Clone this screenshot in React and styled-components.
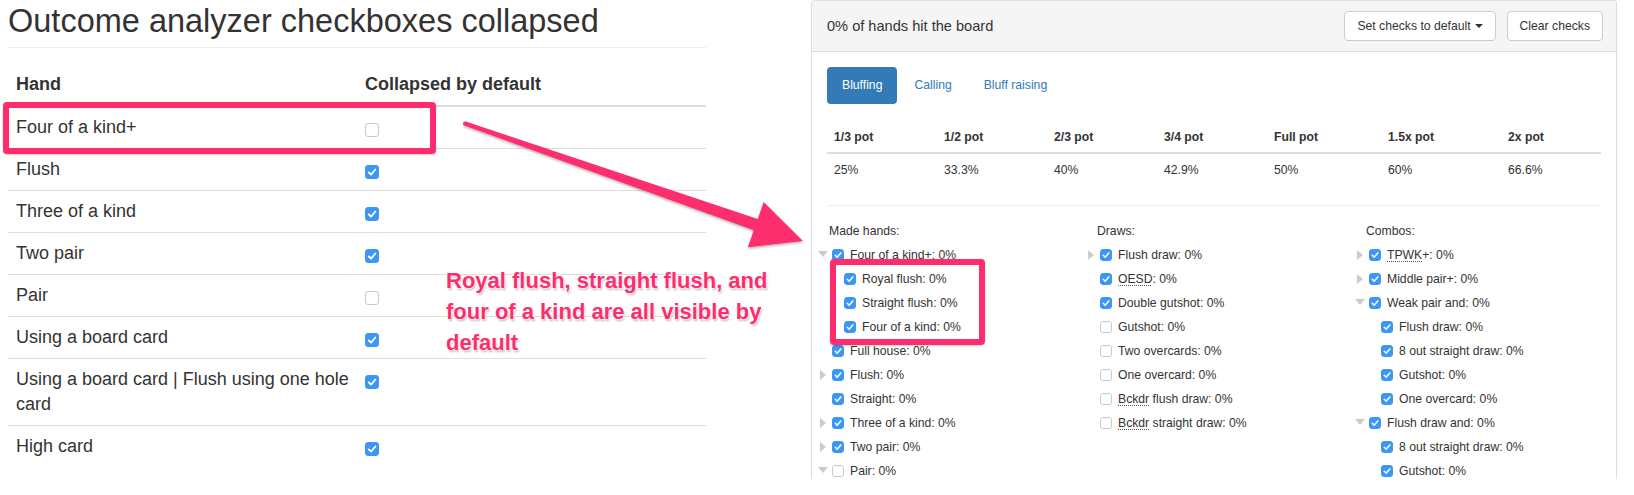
import React from 'react'
import styled, { createGlobalStyle } from 'styled-components'

const PINK = '#fd2d6d'
const MAC_BLUE = '#3b96f6'
const LINK = '#337ab7'

const GlobalStyle = createGlobalStyle`
    html, body {
        margin: 0;
        padding: 0;
        background: #fff;
    }
    body {
        font-family: "Liberation Sans", Arial, Helvetica, sans-serif;
        color: #333;
    }
`

const Page = styled.div`
    position: relative;
    display: flex;
    align-items: flex-start;
    width: 1634px;
    height: 495px;
    overflow: hidden;
`

/* ---------- left: the markdown-ish doc ---------- */

const Doc = styled.section`
    width: 698px;
    margin-left: 8px;
`

const Title = styled.h1`
    margin: 4px 0 16px;
    padding-bottom: 8px;
    border-bottom: 1px solid #eee;
    font-size: 32.5px;
    font-weight: 400;
    line-height: 35px;
    color: #333;
`

const HandTable = styled.table`
    width: 100%;
    border-collapse: collapse;
    font-size: 18px;
    line-height: 25px;
`

const HeadCell = styled.th`
    padding: 8px ${({ $first }) => ($first ? '6px' : '8px')} 8px 8px;
    width: ${({ $first }) => ($first ? '335px' : 'auto')};
    border-bottom: 2px solid #ddd;
    text-align: left;
    font-weight: 700;
`

const Cell = styled.td`
    padding: 8px ${({ $first }) => ($first ? '6px' : '8px')} 8px 8px;
    border-top: 1px solid #ddd;
    vertical-align: top;
`

/* ---------- checkbox ---------- */

const Box = styled.span`
    box-sizing: border-box;
    display: ${({ $block }) => ($block ? 'flex' : 'inline-flex')};
    align-items: center;
    justify-content: center;
    flex: none;
    width: ${({ $size }) => $size}px;
    height: ${({ $size }) => $size}px;
    margin-top: ${({ $block }) => ($block ? '8px' : '0')};
    border-radius: 3px;
    background: ${({ $checked }) => ($checked ? MAC_BLUE : '#fff')};
    border: 1px solid ${({ $checked }) => ($checked ? MAC_BLUE : '#c9c9c9')};
`

function Check({ checked = false, size = 12, block = false }) {
    return (
        <Box $checked={checked} $size={size} $block={block}>
            {checked && (
                <svg width={size - 2} height={size - 2} viewBox="0 0 10 10">
                    <path d="M2.3 5.3 L4.2 7.2 L7.8 2.9" fill="none" stroke="#fff" strokeWidth="1.5" strokeLinecap="round" strokeLinejoin="round" />
                </svg>
            )}
        </Box>
    )
}

/* ---------- right: the analyzer panel ---------- */

const Panel = styled.section`
    box-sizing: border-box;
    width: 806px;
    height: 479px;
    margin-left: 105px;
    border: 1px solid #ddd;
    border-bottom: 0;
    border-radius: 4px 4px 0 0;
    overflow: hidden;
    font-size: 12.2px;
    line-height: 17px;
`

const PanelHeading = styled.header`
    display: flex;
    align-items: center;
    justify-content: space-between;
    padding: 10px 13px 10px 15px;
    background: #f5f5f5;
    border-bottom: 1px solid #ddd;
`

const HeadingTitle = styled.div`
    font-size: 14.6px;
`

const ButtonGroup = styled.div`
    display: flex;
    gap: 11px;
`

const Button = styled.button`
    display: inline-flex;
    align-items: center;
    padding: 5px 12px;
    background: #fff;
    border: 1px solid #ccc;
    border-radius: 4px;
    font-family: inherit;
    font-size: 12.2px;
    line-height: 18px;
    color: #333;
`

const Caret = styled.span`
    display: inline-block;
    width: 0;
    height: 0;
    margin-left: 4px;
    border-top: 4px solid #333;
    border-left: 4px solid transparent;
    border-right: 4px solid transparent;
`

const PanelBody = styled.div`
    padding: 15px;
`

const Pills = styled.nav`
    display: flex;
    gap: 2px;
`

const Pill = styled.a`
    padding: 10px 15px;
    border-radius: 4px;
    background: ${({ $active }) => ($active ? LINK : 'transparent')};
    color: ${({ $active }) => ($active ? '#fff' : LINK)};
    text-decoration: none;
`

const PotTable = styled.table`
    width: 100%;
    margin-top: 16px;
    border-collapse: collapse;
    table-layout: fixed;
`

const PotHead = styled.th`
    box-sizing: border-box;
    width: ${({ $w }) => $w}px;
    padding: 9px 7px 6px;
    border-bottom: 2px solid #ddd;
    text-align: left;
    font-weight: 700;
    white-space: nowrap;
`

const PotCell = styled.td`
    padding: 8px 7px 7px;
    text-align: left;
`

const Divider = styled.hr`
    margin: 19px 0 0;
    border: 0;
    border-top: 1px solid #eee;
`

const Groups = styled.div`
    display: grid;
    grid-template-columns: 268px 269px 1fr;
    padding: 17px 0 0 2px;
`

const GroupTitle = styled.div`
    margin-bottom: 3px;
`

const Row = styled.div`
    display: flex;
    align-items: center;
    height: 24px;
    padding-left: ${({ $depth }) => 3 + $depth * 12}px;
`

const Toggle = styled.span`
    display: flex;
    align-items: center;
    justify-content: center;
    flex: none;
    width: 10px;
    height: 12px;
    margin: -2px 4px 0 -14px;

    &::before {
        content: '';
        display: ${({ $dir }) => ($dir ? 'block' : 'none')};
        width: 0;
        height: 0;
        ${({ $dir }) =>
            $dir === 'down'
                ? `border-top: 6px solid #cbcbcb;
                   border-left: 5px solid transparent;
                   border-right: 5px solid transparent;`
                : `border-left: 6px solid #cbcbcb;
                   border-top: 5px solid transparent;
                   border-bottom: 5px solid transparent;
                   margin-top: 2px;`}
    }
`

const Label = styled.span`
    margin-left: 6px;
    white-space: nowrap;
`

const Abbr = styled.abbr`
    text-decoration: underline dotted #555;
    text-underline-offset: 2px;
`

/* ---------- annotation layer (drawn over the page) ---------- */

const Highlight = styled.div`
    position: absolute;
    box-sizing: border-box;
    left: ${({ $x }) => $x}px;
    top: ${({ $y }) => $y}px;
    width: ${({ $w }) => $w}px;
    height: ${({ $h }) => $h}px;
    border: 6px solid ${PINK};
    border-radius: 4px;
    box-shadow: 0 1px 2px rgba(0, 0, 0, 0.2);
`

const Arrow = styled.svg`
    position: absolute;
    left: 455px;
    top: 110px;
    overflow: visible;
`

const Note = styled.p`
    position: absolute;
    left: 446px;
    top: 265px;
    width: 330px;
    margin: 0;
    font-size: 22px;
    font-weight: 700;
    line-height: 31px;
    color: ${PINK};
    text-shadow: 0 0 2px #fff, 0 0 2px #fff, 0 0 3px #fff, 1px 2px 2px rgba(0, 0, 0, 0.3);
`

const hands = [
    { hand: 'Four of a kind+', collapsed: false },
    { hand: 'Flush', collapsed: true },
    { hand: 'Three of a kind', collapsed: true },
    { hand: 'Two pair', collapsed: true },
    { hand: 'Pair', collapsed: false },
    { hand: 'Using a board card', collapsed: true },
    { hand: 'Using a board card | Flush using one hole card', collapsed: true },
    { hand: 'High card', collapsed: true },
]

const pots = [
    ['1/3 pot', '25%', 110],
    ['1/2 pot', '33.3%', 110],
    ['2/3 pot', '40%', 110],
    ['3/4 pot', '42.9%', 110],
    ['Full pot', '50%', 114],
    ['1.5x pot', '60%', 120],
    ['2x pot', '66.6%', 100],
]

const groups = [
    {
        title: 'Made hands:',
        items: [
            { text: 'Four of a kind+: 0%', toggle: 'down', checked: true, children: [
                { text: 'Royal flush: 0%', checked: true },
                { text: 'Straight flush: 0%', checked: true },
                { text: 'Four of a kind: 0%', checked: true },
            ] },
            { text: 'Full house: 0%', checked: true },
            { text: 'Flush: 0%', toggle: 'right', checked: true },
            { text: 'Straight: 0%', checked: true },
            { text: 'Three of a kind: 0%', toggle: 'right', checked: true },
            { text: 'Two pair: 0%', toggle: 'right', checked: true },
            { text: 'Pair: 0%', toggle: 'down', checked: false },
        ],
    },
    {
        title: 'Draws:',
        items: [
            { text: 'Flush draw: 0%', toggle: 'right', checked: true },
            { abbr: 'OESD', text: ': 0%', checked: true },
            { text: 'Double gutshot: 0%', checked: true },
            { text: 'Gutshot: 0%', checked: false },
            { text: 'Two overcards: 0%', checked: false },
            { text: 'One overcard: 0%', checked: false },
            { abbr: 'Bckdr', text: ' flush draw: 0%', checked: false },
            { abbr: 'Bckdr', text: ' straight draw: 0%', checked: false },
        ],
    },
    {
        title: 'Combos:',
        items: [
            { abbr: 'TPWK', text: '+: 0%', toggle: 'right', checked: true },
            { text: 'Middle pair+: 0%', toggle: 'right', checked: true },
            { text: 'Weak pair and: 0%', toggle: 'down', checked: true, children: [
                { text: 'Flush draw: 0%', checked: true },
                { text: '8 out straight draw: 0%', checked: true },
                { text: 'Gutshot: 0%', checked: true },
                { text: 'One overcard: 0%', checked: true },
            ] },
            { text: 'Flush draw and: 0%', toggle: 'down', checked: true, children: [
                { text: '8 out straight draw: 0%', checked: true },
                { text: 'Gutshot: 0%', checked: true },
            ] },
        ],
    },
]

function OutcomeRow({ item, depth = 0 }) {
    return (
        <>
            <Row $depth={depth}>
                {depth === 0 && <Toggle $dir={item.toggle} />}
                <Check checked={item.checked} />
                <Label>
                    {item.abbr && <Abbr>{item.abbr}</Abbr>}
                    {item.text}
                </Label>
            </Row>
            {item.children && item.children.map((child, i) => (
                <OutcomeRow key={i} item={child} depth={depth + 1} />
            ))}
        </>
    )
}

export default function App() {
    return (
        <Page>
            <GlobalStyle />

            <Doc>
                <Title>Outcome analyzer checkboxes collapsed</Title>
                <HandTable>
                    <thead>
                        <tr>
                            <HeadCell $first>Hand</HeadCell>
                            <HeadCell>Collapsed by default</HeadCell>
                        </tr>
                    </thead>
                    <tbody>
                        {hands.map(({ hand, collapsed }) => (
                            <tr key={hand}>
                                <Cell $first>{hand}</Cell>
                                <Cell><Check checked={collapsed} size={14} block /></Cell>
                            </tr>
                        ))}
                    </tbody>
                </HandTable>
            </Doc>

            <Panel>
                <PanelHeading>
                    <HeadingTitle>0% of hands hit the board</HeadingTitle>
                    <ButtonGroup>
                        <Button>Set checks to default<Caret /></Button>
                        <Button>Clear checks</Button>
                    </ButtonGroup>
                </PanelHeading>
                <PanelBody>
                    <Pills>
                        <Pill $active>Bluffing</Pill>
                        <Pill>Calling</Pill>
                        <Pill>Bluff raising</Pill>
                    </Pills>
                    <PotTable>
                        <thead>
                            <tr>
                                {pots.map(([name, , w]) => <PotHead key={name} $w={w}>{name}</PotHead>)}
                            </tr>
                        </thead>
                        <tbody>
                            <tr>
                                {pots.map(([name, value]) => <PotCell key={name}>{value}</PotCell>)}
                            </tr>
                        </tbody>
                    </PotTable>
                    <Divider />
                    <Groups>
                        {groups.map(group => (
                            <div key={group.title}>
                                <GroupTitle>{group.title}</GroupTitle>
                                {group.items.map((item, i) => <OutcomeRow key={i} item={item} />)}
                            </div>
                        ))}
                    </Groups>
                </PanelBody>
            </Panel>

            <Highlight $x={3} $y={102} $w={433} $h={52} />
            <Highlight $x={830} $y={259} $w={155} $h={86} />

            <Arrow width="360" height="150" viewBox="455 110 360 150">
                <defs>
                    <filter id="arrowShadow" x="-5%" y="-10%" width="110%" height="130%">
                        <feDropShadow dx="0" dy="1.5" stdDeviation="1.2" floodColor="#000" floodOpacity="0.3" />
                    </filter>
                </defs>
                <g filter="url(#arrowShadow)" fill={PINK}>
                    <polygon points="465.7,121.6 757.8,218.9 763.7,201.9 803,241 747.9,247.3 753.8,230.3 464.3,125.4" />
                    <circle cx="465" cy="123.5" r="2" />
                </g>
            </Arrow>

            <Note>Royal flush, straight flush, and four of a kind are all visible by default</Note>
        </Page>
    )
}
